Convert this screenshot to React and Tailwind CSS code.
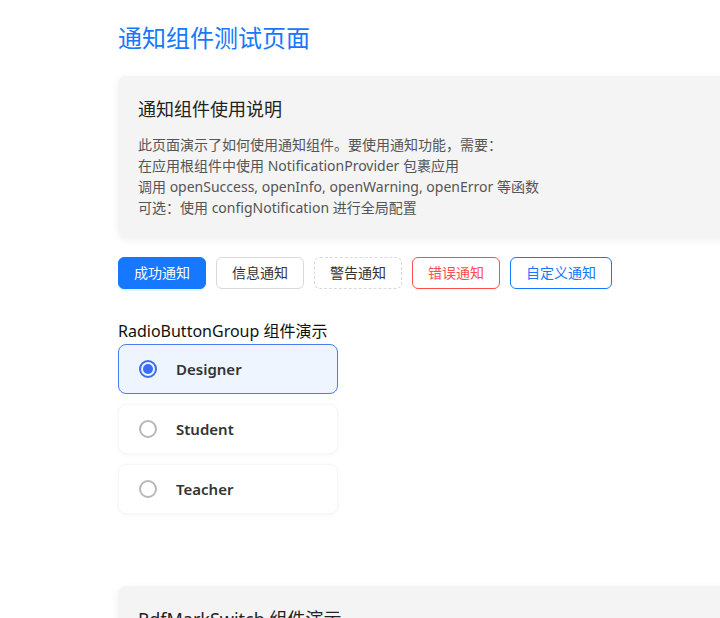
import React, { useState } from 'react';

const FONT = { fontFamily: '"Noto Sans", "Noto Sans CJK SC", sans-serif' };

const OPTIONS = ['Designer', 'Student', 'Teacher'];

// Buttons mimic antd's default / primary / dashed / danger variants
function NotifyButtons() {
    const base = 'h-8 px-[15px] rounded-md text-sm leading-none border';
    return (
        <div className="flex gap-[10px]">
            <button className={`${base} bg-[#1677ff] border-[#1677ff] text-white shadow-[0_2px_0_rgba(5,145,255,0.1)]`}>成功通知</button>
            <button className={`${base} bg-white border-[#d9d9d9] text-[#333]`}>信息通知</button>
            <button className={`${base} bg-white border-dashed border-[#d9d9d9] text-[#333]`}>警告通知</button>
            <button className={`${base} bg-white border-[#ff4d4f] text-[#ff4d4f]`}>错误通知</button>
            <button className={`${base} bg-white border-[#1677ff] text-[#1677ff]`}>自定义通知</button>
        </div>
    );
}

function RadioOption({ label, checked, onSelect }) {
    return (
        <div
            onClick={onSelect}
            className={`w-[220px] h-[50px] flex items-center px-5 gap-5 rounded-lg border cursor-pointer ${
                checked
                    ? 'bg-[#eef5ff] border-[#4b7bf5]'
                    : 'bg-white border-[#f7f7f7] shadow-[0_1px_4px_rgba(0,0,0,0.04)]'
            }`}
        >
            <span
                className={`w-[18px] h-[18px] rounded-full border-2 flex items-center justify-center ${
                    checked ? 'border-[#3b6cf6]' : 'border-[#b8b8b8]'
                }`}
            >
                {checked && <span className="w-[10px] h-[10px] rounded-full bg-[#3b6cf6]" />}
            </span>
            <span className="text-[15px] font-semibold text-[#333] -ml-[1px]">{label}</span>
        </div>
    );
}

export default function App() {
    const [selected, setSelected] = useState('Designer');

    return (
        <div className="min-h-[618px] bg-white pl-[118px] pt-[22px] overflow-hidden" style={FONT}>
            <h1 className="text-[24px] leading-8 text-[#1677ff]">通知组件测试页面</h1>

            {/* Usage card */}
            <div className="mt-[22px] w-[800px] bg-[#f4f4f4] rounded-lg p-5 shadow-[0_2px_8px_rgba(0,0,0,0.06)]">
                <h2 className="text-[18px] leading-[27px] text-[#222]">通知组件使用说明</h2>
                <div className="mt-[11px] text-sm leading-[21px] text-[#555]">
                    <p>此页面演示了如何使用通知组件。要使用通知功能，需要：</p>
                    <p>在应用根组件中使用 NotificationProvider 包裹应用</p>
                    <p>调用 openSuccess, openInfo, openWarning, openError 等函数</p>
                    <p>可选：使用 configNotification 进行全局配置</p>
                </div>
            </div>

            <div className="mt-[19px]">
                <NotifyButtons />
            </div>

            <div className="mt-[31px] text-base leading-[22px] text-[#111]">RadioButtonGroup 组件演示</div>
            <div className="mt-[2px] flex flex-col gap-[10px]">
                {OPTIONS.map((o) => (
                    <RadioOption key={o} label={o} checked={selected === o} onSelect={() => setSelected(o)} />
                ))}
            </div>

            {/* Next demo card, cut off by viewport */}
            <div className="mt-[72px] w-[800px] bg-[#f4f4f4] rounded-lg p-5 shadow-[0_2px_8px_rgba(0,0,0,0.06)]">
                <h2 className="text-[18px] leading-[27px] text-[#222]">RdfMarkSwitch 组件演示</h2>
                <div className="h-[80px]" />
            </div>
        </div>
    );
}
